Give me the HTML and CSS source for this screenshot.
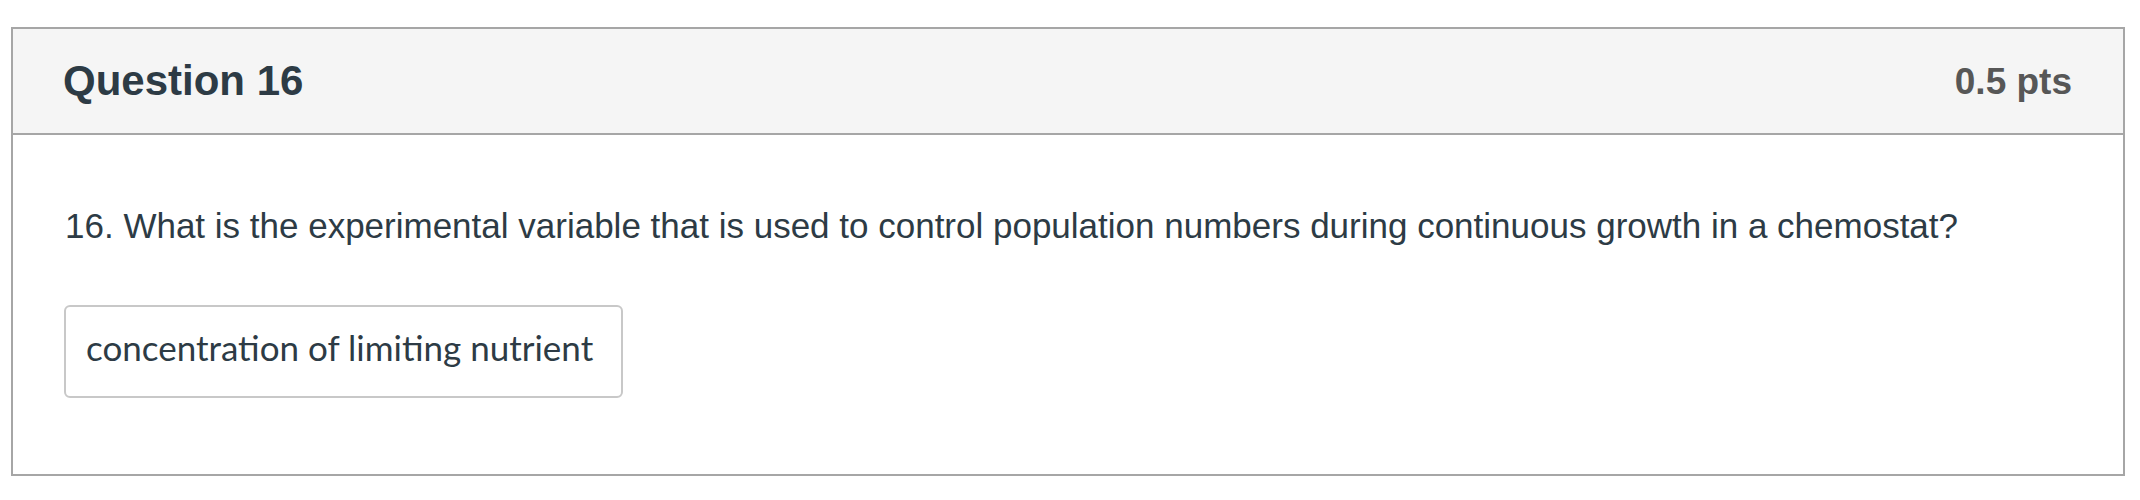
FILE: index.html
```html
<!DOCTYPE html>
<html lang="en">
<head>
<meta charset="utf-8">
<title>Question 16</title>
<link rel="stylesheet" href="styles.css">
</head>
<body>
<div class="question">
  <div class="question-header">
    <h2 class="question-title">Question 16</h2>
    <div class="question-points">0.5 pts</div>
  </div>
  <div class="question-body">
    <p class="question-text">16. What is the experimental variable that is used to control population numbers during continuous growth in a chemostat?</p>
    <div class="answer-box">concentration of limiting nutrient</div>
  </div>
</div>
</body>
</html>
```
FILE: styles.css
```css
html, body {
  margin: 0;
  padding: 0;
  background: #ffffff;
}

body {
  font-family: "Liberation Sans", Arial, sans-serif;
  color: #2d3b45;
}

.question {
  box-sizing: border-box;
  width: 2114px;
  margin: 27px 0 0 11px;
  border: 2px solid #a6a6a6;
  background: #ffffff;
}

.question-header {
  display: flex;
  align-items: center;
  justify-content: space-between;
  height: 104px;
  padding: 0 51px 0 50px;
  background: #f5f5f5;
  border-bottom: 2px solid #a6a6a6;
}

.question-title {
  margin: 0;
  font-size: 42px;
  font-weight: bold;
  color: #2d3b45;
  line-height: 1;
}

.question-points {
  font-size: 37px;
  font-weight: bold;
  color: #575757;
  line-height: 1;
}

.question-body {
  padding: 66px 52px 76px 52px;
}

.question-text {
  margin: 0 0 55px 0;
  font-size: 35px;
  line-height: 49px;
  color: #2d3b45;
}

.answer-box {
  box-sizing: border-box;
  width: 559px;
  height: 93px;
  margin-left: -1px;
  padding: 19px 19px 0 20px;
  border: 2px solid #c8c8c8;
  border-radius: 6px;
  font-family: Lato, "Open Sans", sans-serif;
  font-size: 35px;
  line-height: 42px;
  white-space: nowrap;
  color: #2d3b45;
}
```
